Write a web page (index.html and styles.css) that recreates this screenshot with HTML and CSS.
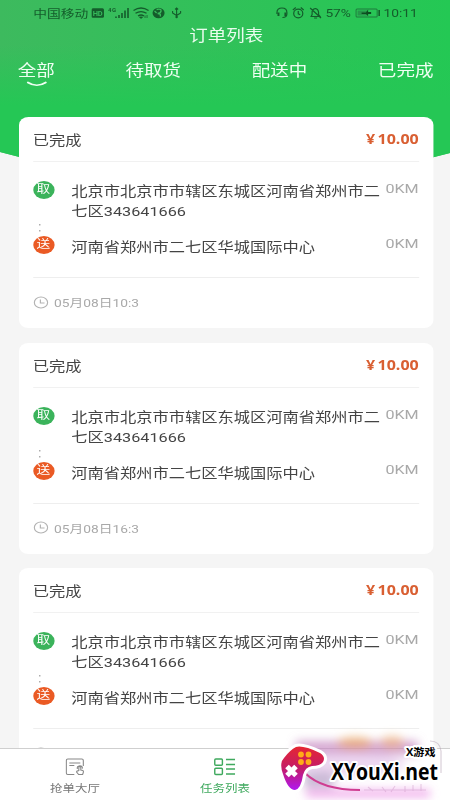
FILE: index.html
```html
<!DOCTYPE html>
<html lang="zh-CN">
<head>
<meta charset="utf-8">
<title>订单列表</title>
<link rel="stylesheet" href="styles.css">
</head>
<body>
<div class="app">
  <div class="backdrop"></div>
  <header class="status">
    <span class="carrier">中国移动</span>
    <svg class="signals" width="81" height="14" viewBox="0 0 96 14" preserveAspectRatio="none">
      <rect x="0" y="2.3" width="12.5" height="9.5" rx="1.5" fill="#145c2b"/>
      <text x="1.2" y="9.8" font-size="7.5" font-weight="700" fill="#35ba5b" textLength="10">HD</text>
      <text x="16.5" y="5.8" font-size="6" font-weight="700" fill="#145c2b" textLength="8">4G</text>
      <path d="M24.5 12v-1.5M27.5 12V9M30.5 12V7M33.5 12V4.5M36.5 12V2" stroke="#145c2b" stroke-width="1.6"/>
      <path d="M42 4.5q7.500-5 15 0M44 7.300q5.500-3.500 11 0M46.500 10q3-2 6 0" fill="none" stroke="#145c2b" stroke-width="1.300"/>
      <path d="M48 11h3l-1.500 1.500zM53.500 12V9.500M55.500 9v3" fill="#145c2b" stroke="#145c2b" stroke-width=".8"/>
      <ellipse cx="67" cy="7" rx="6" ry="5.300" fill="#145c2b"/>
      <path d="M65 3.500q5-1 4.500 1.500T66 7.500q4 0 2.500 3M63 5l2 2" fill="none" stroke="#38ba5b" stroke-width="1.300"/>
      <path d="M85 2v9M81 5V7l4 2.500 4-2.500V5M83.500 3.500L85 2l1.500 1.500" fill="none" stroke="#145c2b" stroke-width="1.100"/>
      <circle cx="85" cy="11" r="1.200" fill="#145c2b"/>
    </svg>
    <svg class="alerts" width="40" height="14" viewBox="0 0 48 14" preserveAspectRatio="none">
      <g fill="none" stroke="#145c2b" stroke-width="1.200">
        <path d="M1.500 8V6.500q0-4.500 5-4.500t5 4.500V8q0 3.500-4.500 3.500"/>
        <path d="M3 6.500v3.500M10 6.500v3.500" stroke-width="2"/>
        <ellipse cx="23" cy="7.500" rx="4.600" ry="4.300"/><path d="M23 5v2.800l2 1M17.500 4l3-2.500M28.500 4l-3-2.500"/>
        <path d="M36 10.500h9l-1.500-2V6q-.5-3-3-3.500-2.500 0-3.500 3v3zM35 2l11 10M39 12h3"/>
      </g>
    </svg>
    <span class="percent">57%</span>
    <svg class="battery" width="22" height="14" viewBox="0 0 26 14" preserveAspectRatio="none">
      <rect x="1" y="3" width="21" height="8" rx="1" fill="none" stroke="#1f7a3c"/>
      <path d="M2.500 4.500h10v5h-10z" fill="#27964a"/>
      <path d="M7 7h4l1.500-2V6.500h3v1h-3V9L11 7.500H7z" fill="#0d4d20" stroke="#0d4d20"/>
      <path d="M24 4v6" stroke="#145c2b" stroke-width="1.500"/>
    </svg>
    <span class="clock">10:11</span>
  </header>
  <h1 class="title">订单列表</h1>
  <nav class="tabs">
    <span class="tab current">全部
      <svg class="smile" width="18" height="6" viewBox="0 0 18 6"><path d="M1.500 1.500Q9 7 16.500 1.500" fill="none" stroke="#effff2" stroke-width="1.700" stroke-linecap="round"/></svg>
    </span>
    <span class="tab">待取货</span>
    <span class="tab">配送中</span>
    <span class="tab">已完成</span>
  </nav>

  <main class="orders">
    <article class="card">
      <div class="card-head"><span>已完成</span><b class="price"><i>¥</i>10.00</b></div>
      <div class="route">
        <div class="stop pickup"><span class="badge">取</span><p>北京市北京市市辖区东城区河南省郑州市二七区343641666</p><span class="km">0KM</span></div>
        <div class="link"></div>
        <div class="stop drop"><span class="badge">送</span><p>河南省郑州市二七区华城国际中心</p><span class="km">0KM</span></div>
      </div>
      <div class="time"><svg width="13" height="13" viewBox="0 0 13 13"><circle cx="6.500" cy="6.500" r="5.600"/><path d="M6 3.500V7h3.500"/></svg>05月08日10:3</div>
    </article>
    <article class="card">
      <div class="card-head"><span>已完成</span><b class="price"><i>¥</i>10.00</b></div>
      <div class="route">
        <div class="stop pickup"><span class="badge">取</span><p>北京市北京市市辖区东城区河南省郑州市二七区343641666</p><span class="km">0KM</span></div>
        <div class="link"></div>
        <div class="stop drop"><span class="badge">送</span><p>河南省郑州市二七区华城国际中心</p><span class="km">0KM</span></div>
      </div>
      <div class="time"><svg width="13" height="13" viewBox="0 0 13 13"><circle cx="6.500" cy="6.500" r="5.600"/><path d="M6 3.500V7h3.500"/></svg>05月08日16:3</div>
    </article>
    <article class="card">
      <div class="card-head"><span>已完成</span><b class="price"><i>¥</i>10.00</b></div>
      <div class="route">
        <div class="stop pickup"><span class="badge">取</span><p>北京市北京市市辖区东城区河南省郑州市二七区343641666</p><span class="km">0KM</span></div>
        <div class="link"></div>
        <div class="stop drop"><span class="badge">送</span><p>河南省郑州市二七区华城国际中心</p><span class="km">0KM</span></div>
      </div>
      <div class="time"><svg width="13" height="13" viewBox="0 0 13 13"><circle cx="6.500" cy="6.500" r="5.600"/><path d="M6 3.500V7h3.500"/></svg></div>
    </article>
  </main>

  <footer class="tabbar">
    <div class="item">
      <svg width="16" height="18" viewBox="0 0 19 18" preserveAspectRatio="none" fill="none" stroke="#888" stroke-width="1.100">
        <path d="M9 16.500H2.500q-1.500 0-1.500-1.500V2.500Q1 1 2.500 1h14Q18 1 18 2.500V8M4 5h11M4 7.500h5"/>
        <path d="M13.500 13V9.500q0-1 1-1t1 1V12l2 .5q1 .5.500 2l-.7 2h-4l-2-2.500q0-1.500 2-1M12 11q-.5-3 2.500-3.300 3 .3 2.500 3"/>
      </svg>
      <span>抢单大厅</span>
    </div>
    <div class="item on">
      <svg width="18" height="18" viewBox="0 0 21 18" preserveAspectRatio="none" fill="none" stroke="#3fa95e" stroke-width="1.400">
        <rect x="1" y="1" width="7.500" height="6.300" rx="1"/><rect x="1" y="10.200" width="7.500" height="6.300" rx="1"/>
        <path d="M12 1.500h9M12 6.500h9M12 11h9M12 16h9"/>
      </svg>
      <span>任务列表</span>
    </div>
    <div class="item"></div>
  </footer>
</div>

<svg class="mark" width="180" height="66" viewBox="0 0 180 66">
  <defs>
    <linearGradient id="pad" x1="0" y1="0" x2="0" y2="1"><stop offset="0" stop-color="#e52632"/><stop offset=".5" stop-color="#c41c68"/><stop offset="1" stop-color="#b018f0"/></linearGradient>
    <filter id="soft" x="-30%" y="-60%" width="160%" height="220%"><feGaussianBlur stdDeviation="5"/></filter>
  </defs>
  <g filter="url(#soft)">
    <rect x="26" y="7" width="122" height="14" fill="#c583bd" opacity=".7"/>
    <ellipse cx="85" cy="9" rx="18" ry="6" fill="#eda04a" opacity=".6"/>
    <ellipse cx="122" cy="8" rx="12" ry="6" fill="#eeaa6a" opacity=".6"/>
    <ellipse cx="80" cy="30" rx="55" ry="12" fill="#deb8e6" opacity=".55"/>
    <rect x="34" y="38" width="30" height="16" fill="#9e83b5" opacity=".55"/>
    <rect x="36" y="56" width="124" height="7" fill="#e46bda" opacity=".6"/>
  </g>
  <path d="M160 7q10 0 11 10v22" fill="none" stroke="#b6a2b4" stroke-width="1.200" opacity=".5"/>
  <path d="M94 56h62M98 53l5 4M112 53l4 5M125 52l-4 6M135 52v6M143 51v6M151 50v7" stroke="#a95f9f" stroke-width="1.200" opacity=".25"/>
  <path d="M35 39Q52 56 90 56" fill="none" stroke="#cf3d91" stroke-width="2"/>
  <path d="M26 13Q33 11 50 19q6 4 3 9-3 4-11 4-7 1-9 9-2 14-8 15-7 0-12-16-4-11 1-16 6-8 12-11z" fill="#fff" stroke="#fff" stroke-width="6" stroke-linejoin="round"/>
  <path d="M26 13Q33 11 50 19q6 4 3 9-3 4-11 4-7 1-9 9-2 14-8 15-7 0-12-16-4-11 1-16 6-8 12-11z" fill="url(#pad)"/>
  <g fill="#ffad18"><circle cx="31" cy="20.500" r="2.900"/><circle cx="38.500" cy="20.500" r="2.900"/><circle cx="31" cy="28" r="2.900"/><circle cx="38.500" cy="28" r="2.900"/></g>
  <path d="M17 32.500l9 9M26 32.500l-9 9" stroke="#fff" stroke-width="5"/>
  <text class="mark-name" x="61" y="46" textLength="107" lengthAdjust="spacingAndGlyphs">XYouXi.net</text>
  <text class="mark-sub" x="136" y="22" textLength="29.500" lengthAdjust="spacingAndGlyphs">X游戏</text>
</svg>
</body>
</html>
```
FILE: styles.css
```css
* { box-sizing: border-box; margin: 0; padding: 0; }
html, body { width: 450px; height: 800px; overflow: hidden; }
body { position: relative; background: #f5f5f5; }

.app {
  position: relative;
  width: 379px;
  height: 800px;
  overflow: hidden;
  transform: scaleX(1.1875);
  transform-origin: 0 0;
  background: #f5f5f5;
  color: #444;
  font-family: Roboto, "Noto Sans CJK SC", sans-serif;
  font-size: 13.7px;
  display: flex;
  flex-direction: column;
}
.backdrop {
  position: absolute;
  inset: 0 0 auto 0;
  height: 200px;
  background: linear-gradient(to bottom, rgba(37,199,85,0) 45px, #25c755 105px), linear-gradient(to right, #3dba5e, #24c854);
  clip-path: polygon(0 0, 100% 0, 100% 153px, 50% 210px, 0 152px);
}
.status {
  position: relative;
  height: 25px;
  padding: 1px 0 0 28px;
  display: flex;
  align-items: center;
  color: #145c2b;
  font-size: 11.6px;
}
.signals { margin-left: 1.500px; font-family: Roboto, sans-serif; }
.carrier { width: 47px; white-space: nowrap; }
.alerts { margin-left: 74px; }
.percent { margin-left: 2.500px; width: 22px; }
.battery { margin-left: 2.500px; }
.clock { margin-left: 2.500px; }
.title {
  position: relative;
  height: 21px;
  line-height: 23px;
  text-align: center;
  padding-left: 2px;
  color: #e9fced;
  font-size: 15.6px;
  font-weight: 400;
}
.tabs {
  position: relative;
  height: 71px;
  padding: 14px 14px 0 15px;
  display: flex;
  justify-content: space-between;
  line-height: 23px;
  font-size: 15.6px;
  color: #effff2;
}
.tab { position: relative; }
.smile { position: absolute; left: 7px; top: 21px; }
.orders {
  position: relative;
  height: 631px;
  overflow: hidden;
  padding: 0 14.400px 0 16px;
  display: flex;
  flex-direction: column;
  gap: 14.500px;
}
.card {
  flex: none;
  height: 211.200px;
  border-radius: 8px;
  background: #fff;
  padding: 0 12px 0 11.500px;
}
.card-head {
  height: 45px;
  border-bottom: 1px solid #f1f1f1;
  display: flex;
  justify-content: space-between;
  align-items: center;
}
.price { color: #d95f32; font: 700 13.500px "Noto Sans", sans-serif; }
.price i { font-style: normal; font-size: 13.500px; margin-right: 2px; }
.route { height: 116px; padding-top: 18px; border-bottom: 1px solid #eee; }
.stop { display: flex; align-items: flex-start; }
.badge {
  flex: none;
  width: 18px;
  height: 18px;
  margin-top: 1px;
  border-radius: 50%;
  background: #3bb35b;
  color: #fff;
  font-size: 11.500px;
  line-height: 17px;
  text-align: center;
}
.drop .badge { background: #ea5a24; }
.stop p { width: 264px; margin-left: 14.500px; line-height: 20px; padding-top: 1px; word-break: break-all; }
.drop p { padding-top: 2px; }
.km { margin-left: auto; line-height: 16px; color: #a9a9a9; font-size: 13.600px; }
.pickup { height: 41px; }
.link { width: 1.500px; height: 14px; margin-left: 5px; background: linear-gradient(#999, #999) 0 3px / 100% 1.500px no-repeat, linear-gradient(#999, #999) 0 9px / 100% 1.500px no-repeat; }
.time { height: 48px; display: flex; align-items: center; gap: 4.500px; padding-left: .5px; color: #a9a9a9; font-size: 11.600px; }
.time svg { fill: none; stroke: #b3b3b3; stroke-width: 1; }
.tabbar {
  position: relative;
  height: 52px;
  background: #fff;
  border-top: 1px solid #cfcfcf;
  display: flex;
}
.item { flex: 1; display: flex; flex-direction: column; align-items: center; padding-top: 9px; color: #777; font-size: 10.500px; line-height: 15px; gap: 5px; }
.item.on { color: #3fa95e; }
.mark { position: absolute; left: 270px; top: 734px; overflow: visible; }
.mark text { fill: #000; stroke: #fff; stroke-width: 4px; stroke-linejoin: round; paint-order: stroke; font-family: "Open Sans", "Noto Sans CJK SC", sans-serif; font-weight: 700; }
.mark-name { font-size: 24px; }
.mark-sub { font-size: 10.500px; }
```
